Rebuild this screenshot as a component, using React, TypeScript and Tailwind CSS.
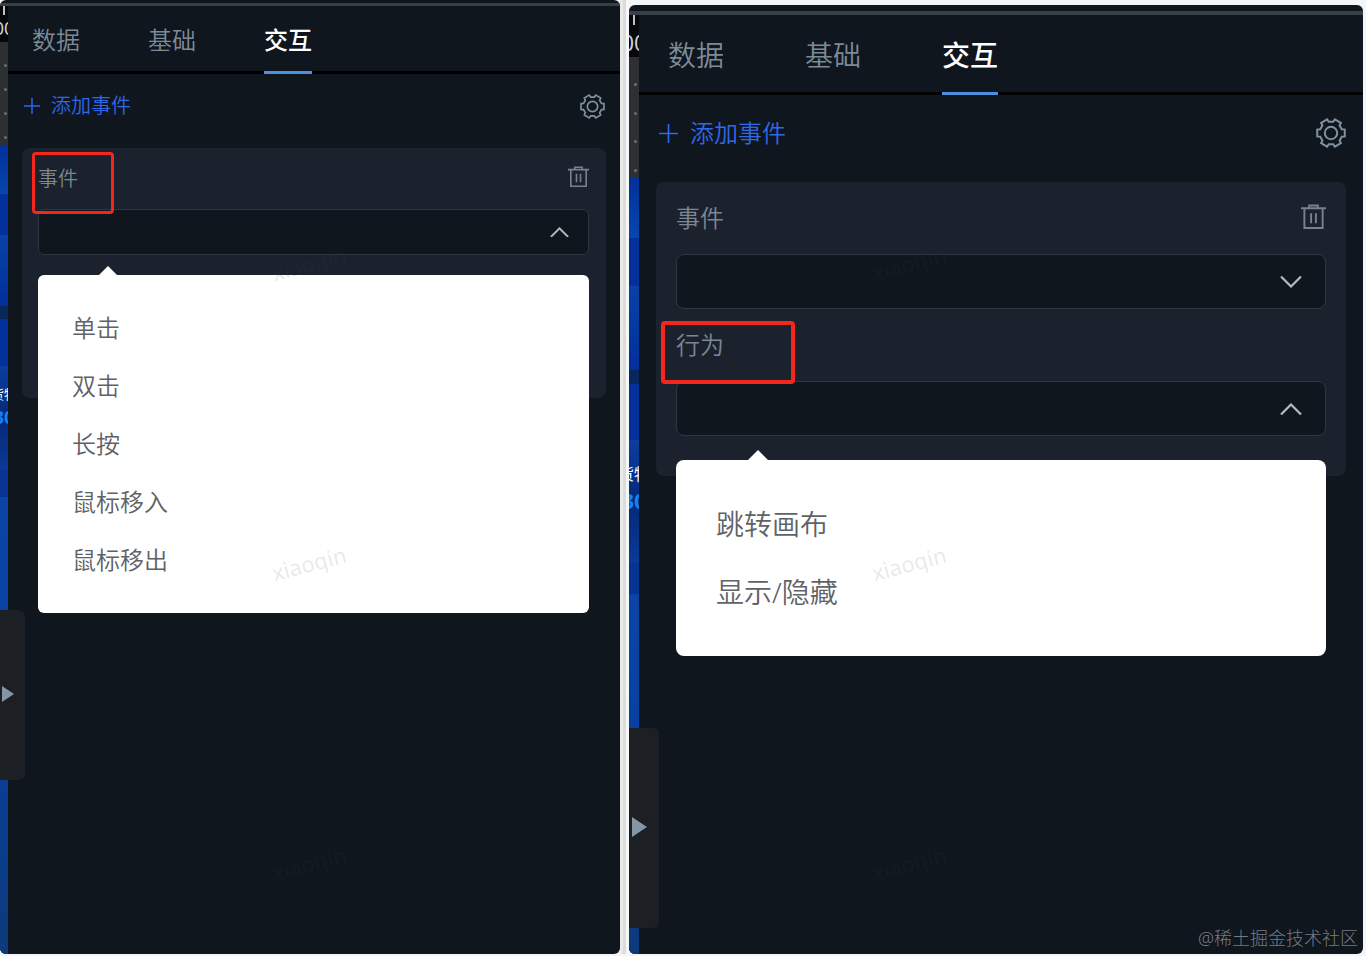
import { useState } from "react";
import clsx from "clsx";

type Size = "sm" | "lg";

interface PanelProps {
  id: string;
  size: Size;
  // which drop-down is open and what it offers
  openField: "event" | "action";
  options: string[];
}

const TABS = ["数据", "基础", "交互"];

// six-toothed gear outline, centred in a 30x30 box
const GEAR = [0, 60, 120, 180, 240, 300]
  .flatMap((a) => [[a - 19, 11.4], [a - 14, 14.2], [a + 14, 14.2], [a + 19, 11.4]])
  .map(([a, r]) => {
    const t = (a * Math.PI) / 180;
    return `${(15 + r * Math.cos(t)).toFixed(2)},${(15 + r * Math.sin(t)).toFixed(2)}`;
  })
  .join(" ");

function GearIcon({ className }: { className: string }) {
  return (
    <svg viewBox="0 0 30 30" fill="none" stroke="currentColor" strokeWidth="2" className={className}>
      <polygon points={GEAR} />
      <circle cx="15" cy="15" r="6.2" />
    </svg>
  );
}

function TrashIcon({ className }: { className: string }) {
  return (
    <svg viewBox="0 0 26 26" fill="none" stroke="currentColor" strokeWidth="2" className={className}>
      <path d="M0 4.5H26M8.5 4.5V1.5H17.5V4.5M3.5 4.5V25H22.5V4.5M10.5 9.5V20M15.5 9.5V20" />
    </svg>
  );
}

function PlusIcon({ className }: { className: string }) {
  return (
    <svg viewBox="0 0 20 20" fill="none" stroke="currentColor" strokeWidth="1.8" className={className}>
      <path d="M0 10H20M10 0V20" />
    </svg>
  );
}

function Chevron({ up, className }: { up: boolean; className: string }) {
  return (
    <svg viewBox="0 0 22 12" fill="none" stroke="currentColor" strokeWidth="2.2" className={className}>
      <path d={up ? "M1 11.5L11 1.5L21 11.5" : "M1 .5L11 10.5L21 .5"} />
    </svg>
  );
}

// Slice of the canvas that shows beside the panel
function CanvasStrip({ size }: { size: Size }) {
  const lg = size === "lg";
  return (
    <div className={clsx("flex shrink-0 flex-col overflow-hidden bg-[#0440a0]", lg ? "w-[10px]" : "w-2")}>
      <div
        className={clsx(
          "flex flex-col items-center overflow-hidden whitespace-nowrap bg-[#07080c] font-normal text-[#d0d0d0]",
          lg ? "h-[42px] text-[22px] leading-[20px]" : "h-9 text-[18px] leading-[16px]"
        )}
      >
        <span className={clsx("w-[2px] shrink-0 bg-[#c0c0c0]", lg ? "mb-[7px] h-[10px]" : "mb-[5px] h-[9px]")} />
        <span>00</span>
      </div>
      <div
        className={clsx(
          "flex flex-col items-center justify-between bg-[#2d3033] pb-[6px]",
          lg ? "h-[121px] pt-[26px]" : "h-[103px] pt-[22px]"
        )}
      >
        {[0, 1, 2, 3].map((n) => (
          <span key={n} className="ml-[2px] size-[3px] rounded-full bg-[#6b6e72]" />
        ))}
      </div>
      <div className={clsx("bg-linear-to-b from-[#03309a] to-[#0647ad]", lg ? "h-[60px]" : "h-[49px]")} />
      <div className={clsx("bg-[#03309a]", lg ? "h-[48px]" : "h-[41px]")} />
      <div className={clsx("bg-linear-to-b from-[#0842a6] to-[#032f9b]", lg ? "h-[84px]" : "h-[71px]")} />
      <div className={clsx("bg-[#08285c]", lg ? "h-[14px]" : "h-[13px]")} />
      <div className={clsx("bg-[#03309a]", lg ? "h-[56px]" : "h-[47px]")} />
      <div
        className={clsx(
          "flex flex-col items-center justify-center whitespace-nowrap bg-linear-to-b from-[#0b3e9e] via-[#052878] to-[#0a3a98]",
          lg ? "h-[123px] pb-[30px]" : "h-[104px] pb-6"
        )}
      >
        <span className={clsx("font-normal text-white", lg ? "text-[16px] leading-[26px]" : "text-[13px] leading-[22px]")}>货物</span>
        <span className={clsx("font-bold text-[#1583f5]", lg ? "text-[22px] leading-[26px]" : "text-[18px] leading-[24px]")}>30</span>
      </div>
      <div className={clsx("bg-[#063394]", lg ? "h-[31px]" : "h-[27px]")} />
      <div className="flex-1 bg-linear-to-b from-[#0a45a6] via-[#063f9e] to-[#0d3a7a]" />
    </div>
  );
}

function EventPanel({ id, size, openField, options }: PanelProps) {
  const lg = size === "lg";
  const [tab, setTab] = useState("交互");
  const [open, setOpen] = useState<string | null>(openField);

  const renderField = (name: "event" | "action", label: string) => {
    const isOpen = open === name;
    const marked = openField === name;
    const fieldId = `${id}-${name}`;

    return (
      <div>
        <div className={clsx("relative flex items-center justify-between", lg ? "h-[72px]" : "h-[61px]")}>
          <label htmlFor={fieldId} className={clsx("text-[#7b8794]", lg ? "text-[24px]" : "text-[20px]")}>
            {label}
          </label>
          {name === "event" && (
            <button type="button" aria-label="删除" className="pb-1 text-[#76828f]">
              <TrashIcon className={lg ? "size-[25px]" : "size-[21px]"} />
            </button>
          )}
          {/* Highlight frame */}
          {marked && (
            <span
              className={clsx(
                "pointer-events-none absolute z-10 rounded border-[#f5271c]",
                lg ? "-left-[15px] top-[12px] h-[63px] w-[134px] border-4" : "-left-[6px] top-[4px] h-[62px] w-[82px] border-3"
              )}
            />
          )}
        </div>

        <div className="relative">
          <select
            id={fieldId}
            onMouseDown={(e) => {
              e.preventDefault();
              setOpen(isOpen ? null : name);
            }}
            className={clsx(
              "block w-full appearance-none border border-[#2e363f] bg-[#0f161e] outline-none",
              lg ? "h-[55px] rounded-lg" : "h-[46px] rounded-md"
            )}
          />
          <span className={clsx("pointer-events-none absolute inset-y-0 flex items-center text-[#b4bac2]", lg ? "right-6" : "right-5")}>
            <Chevron up={isOpen} className={lg ? "w-[22px]" : "w-[19px]"} />
          </span>

          {/* Options */}
          {isOpen && (
            <div className={clsx("absolute inset-x-0 top-full z-10 bg-white", lg ? "mt-6 rounded-lg py-[30px]" : "mt-5 rounded-md py-6")}>
              <svg viewBox="0 0 20 10" className={clsx("absolute bottom-full fill-white", lg ? "left-[72px] w-5" : "left-[61px] w-[18px]")}>
                <path d="M0 10L10 0L20 10Z" />
              </svg>
              <ul>
                {options.map((option) => (
                  <li key={option}>
                    <button
                      type="button"
                      onClick={() => setOpen(null)}
                      className={clsx(
                        "block w-full text-left text-[#606266] hover:bg-gray-100",
                        lg ? "h-[68px] px-10 text-[28px]" : "h-[58px] px-[34px] text-[24px]"
                      )}
                    >
                      {option}
                    </button>
                  </li>
                ))}
              </ul>
            </div>
          )}
        </div>
      </div>
    );
  };

  return (
    <section className={clsx("relative flex min-w-0 flex-col overflow-hidden rounded-md bg-[#0f161e]", lg && "mt-[5px]")}>
      {/* Window edge */}
      <div className={clsx("shrink-0 border-b-[#393f47]", lg ? "h-[10px] border-b-4" : "h-[6px] border-b-3")} />

      <div className="flex flex-1">
        <CanvasStrip size={size} />

        <div className="min-w-0 flex-1">
          {/* Tabs */}
          <nav
            className={clsx(
              "flex shadow-[inset_0_-3px_0_#000]",
              lg ? "h-[80px] gap-[81px] pl-[29px]" : "h-[68px] gap-[68px] pl-6"
            )}
          >
            {TABS.map((name) => (
              <button
                key={name}
                type="button"
                onClick={() => setTab(name)}
                className={clsx(
                  "border-b-3 pt-[2px]",
                  lg ? "text-[28px]" : "text-[24px]",
                  tab === name ? "border-[#4a90e2] font-medium text-white" : "border-transparent text-[#7d8b99]"
                )}
              >
                {name}
              </button>
            ))}
          </nav>

          {/* Add event */}
          <div
            className={clsx(
              "flex items-center justify-between",
              lg ? "mb-[11px] h-[76px] pl-5 pr-[17px]" : "mb-[10px] h-16 pl-4 pr-[15px]"
            )}
          >
            <button
              type="button"
              className={clsx("flex items-center text-[#2f68e8]", lg ? "gap-3 text-[24px]" : "gap-[11px] text-[20px]")}
            >
              <PlusIcon className={lg ? "size-[19px]" : "size-4"} />
              添加事件
            </button>
            <button type="button" aria-label="设置" className="text-[#8090a0]">
              <GearIcon className={lg ? "size-[30px]" : "size-[25px]"} />
            </button>
          </div>

          <div className={clsx("rounded-lg bg-[#1b222d]", lg ? "mx-[17px] px-5 pb-10" : "mx-[14px] min-h-[250px] pl-4 pr-[17px]")}>
            {renderField("event", "事件")}
            {openField === "action" && renderField("action", "行为")}
          </div>
        </div>
      </div>

      {/* Collapse handle */}
      <button
        type="button"
        aria-label="收起"
        className={clsx(
          "absolute left-0 rounded-r-md bg-[#1c1f23] pb-[2px] text-[#8495a5]",
          lg ? "top-[723px] h-[200px] w-[30px] pl-[3px]" : "top-[610px] h-[170px] w-[25px] pl-[2px]"
        )}
      >
        <svg viewBox="0 0 12 16" className={clsx("fill-current", lg ? "w-[15px]" : "w-3")}>
          <path d="M0 0L12 8L0 16Z" />
        </svg>
      </button>

      {/* Watermarks, every 300px */}
      <div
        className={clsx(
          "pointer-events-none absolute z-20 flex flex-col gap-[270px] text-[22px] leading-[30px] font-normal text-[#404040]/12",
          lg ? "left-[242px] top-[243px]" : "left-[271px] top-[248px]"
        )}
      >
        {[0, 1, 2].map((n) => (
          <span key={n} className="-rotate-15">xiaoqin</span>
        ))}
      </div>
    </section>
  );
}

export default function App() {
  return (
    <div className="relative grid min-h-screen grid-cols-[620fr_9px_734fr] bg-[#f3f5f6] pb-[2px] pr-[3px] font-['Noto_Sans','Noto_Sans_CJK_SC',sans-serif] font-[350]">
      <EventPanel id="left" size="sm" openField="event" options={["单击", "双击", "长按", "鼠标移入", "鼠标移出"]} />
      <div className="border-r-3 border-l-3 border-r-[#f6f7f8] border-l-[#e8e8e6] bg-[#dcdcda]" />
      <EventPanel id="right" size="lg" openField="action" options={["跳转画布", "显示/隐藏"]} />
      <p className="absolute bottom-1 right-2 text-[18px] font-light text-[#757b82]">@稀土掘金技术社区</p>
    </div>
  );
}
